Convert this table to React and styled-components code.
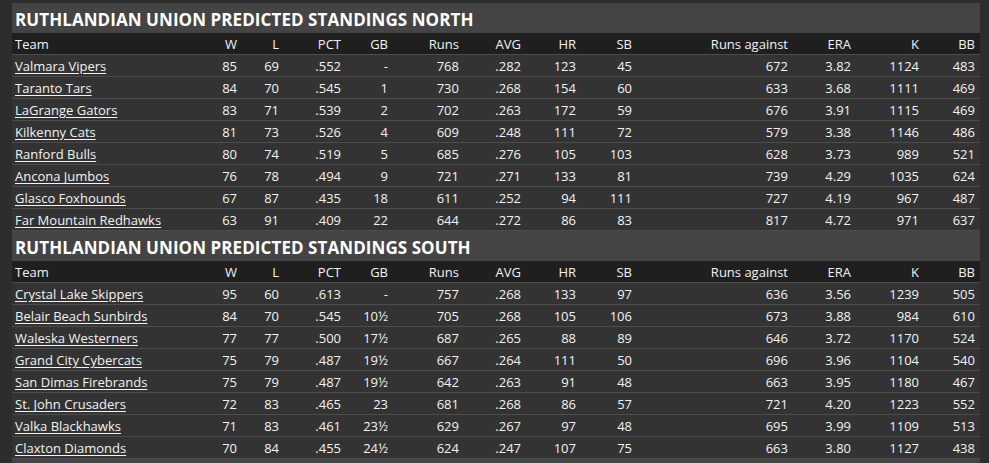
import React from "react";
import styled, { createGlobalStyle } from "styled-components";

const columns = [
  { key: "team", label: "Team", width: 190 },
  { key: "w", label: "W", width: 40 },
  { key: "l", label: "L", width: 42 },
  { key: "pct", label: "PCT", width: 62 },
  { key: "gb", label: "GB", width: 47 },
  { key: "runs", label: "Runs", width: 71 },
  { key: "avg", label: "AVG", width: 62 },
  { key: "hr", label: "HR", width: 55 },
  { key: "sb", label: "SB", width: 56 },
  { key: "ra", label: "Runs against", width: 156 },
  { key: "era", label: "ERA", width: 63 },
  { key: "k", label: "K", width: 68 },
  { key: "bb", label: "BB", width: 56 },
];

const north = [
  ["Valmara Vipers", 85, 69, ".552", "-", 768, ".282", 123, 45, 672, "3.82", 1124, 483],
  ["Taranto Tars", 84, 70, ".545", "1", 730, ".268", 154, 60, 633, "3.68", 1111, 469],
  ["LaGrange Gators", 83, 71, ".539", "2", 702, ".263", 172, 59, 676, "3.91", 1115, 469],
  ["Kilkenny Cats", 81, 73, ".526", "4", 609, ".248", 111, 72, 579, "3.38", 1146, 486],
  ["Ranford Bulls", 80, 74, ".519", "5", 685, ".276", 105, 103, 628, "3.73", 989, 521],
  ["Ancona Jumbos", 76, 78, ".494", "9", 721, ".271", 133, 81, 739, "4.29", 1035, 624],
  ["Glasco Foxhounds", 67, 87, ".435", "18", 611, ".252", 94, 111, 727, "4.19", 967, 487],
  ["Far Mountain Redhawks", 63, 91, ".409", "22", 644, ".272", 86, 83, 817, "4.72", 971, 637],
];

const south = [
  ["Crystal Lake Skippers", 95, 60, ".613", "-", 757, ".268", 133, 97, 636, "3.56", 1239, 505],
  ["Belair Beach Sunbirds", 84, 70, ".545", "10½", 705, ".268", 105, 106, 673, "3.88", 984, 610],
  ["Waleska Westerners", 77, 77, ".500", "17½", 687, ".265", 88, 89, 646, "3.72", 1170, 524],
  ["Grand City Cybercats", 75, 79, ".487", "19½", 667, ".264", 111, 50, 696, "3.96", 1104, 540],
  ["San Dimas Firebrands", 75, 79, ".487", "19½", 642, ".263", 91, 48, 663, "3.95", 1180, 467],
  ["St. John Crusaders", 72, 83, ".465", "23", 681, ".268", 86, 57, 721, "4.20", 1223, 552],
  ["Valka Blackhawks", 71, 83, ".461", "23½", 629, ".267", 97, 48, 695, "3.99", 1109, 513],
  ["Claxton Diamonds", 70, 84, ".455", "24½", 624, ".247", 107, 75, 663, "3.80", 1127, 438],
];

const GlobalStyle = createGlobalStyle`
  body {
    margin: 0;
    background: #2d2d2d;
    font-family: "Open Sans", "Liberation Sans", sans-serif;
    color: #f2f2f2;
  }
`;

const Page = styled.div`
  padding: 3px 9px 0 12px;
`;

const Title = styled.h2`
  margin: 0;
  height: 30px;
  padding: 0 3px;
  background: #444444;
  color: #ffffff;
  font-size: 17px;
  font-weight: 700;
  letter-spacing: 0.07px;
  line-height: 33px;
  white-space: nowrap;
  overflow: hidden;
`;

const Table = styled.table`
  width: 968px;
  border-collapse: collapse;
  table-layout: fixed;
  font-size: 13px;
`;

const Col = styled.col`
  width: ${(p) => p.$w}px;
`;

const HeadRow = styled.tr`
  background: #1f1f1f;
`;

const Row = styled.tr`
  background: #333333;
`;

const Cell = styled.td`
  height: 21px;
  box-sizing: border-box;
  padding: ${(p) => (p.$team ? "2px 0 0 3px" : "2px 5px 0 0")};
  text-align: ${(p) => (p.$team ? "left" : "right")};
  line-height: 19px;
  border-bottom: 1px solid #4c4c4c;
  white-space: nowrap;
  font-weight: 400;
  color: #f2f2f2;
`;

const TeamLink = styled.a`
  color: #f2f2f2;
  text-decoration: underline;
  text-underline-offset: 2px;
`;

const Section = ({ title, rows }) => (
  <section>
    <Title>{title}</Title>
    <Table>
      <colgroup>
        {columns.map((c) => (
          <Col key={c.key} $w={c.width} />
        ))}
      </colgroup>
      <thead>
        <HeadRow>
          {columns.map((c, i) => (
            <Cell as="th" key={c.key} $team={i === 0}>
              {c.label}
            </Cell>
          ))}
        </HeadRow>
      </thead>
      <tbody>
        {rows.map((r) => (
          <Row key={r[0]}>
            {r.map((v, i) => (
              <Cell key={i} $team={i === 0}>
                {i === 0 ? <TeamLink href="#">{v}</TeamLink> : v}
              </Cell>
            ))}
          </Row>
        ))}
      </tbody>
    </Table>
  </section>
);

export default function App() {
  return (
    <>
      <GlobalStyle />
      <Page>
        <Section title="RUTHLANDIAN UNION PREDICTED STANDINGS NORTH" rows={north} />
        <Section title="RUTHLANDIAN UNION PREDICTED STANDINGS SOUTH" rows={south} />
        <Title aria-hidden="true">&nbsp;</Title>
      </Page>
    </>
  );
}
